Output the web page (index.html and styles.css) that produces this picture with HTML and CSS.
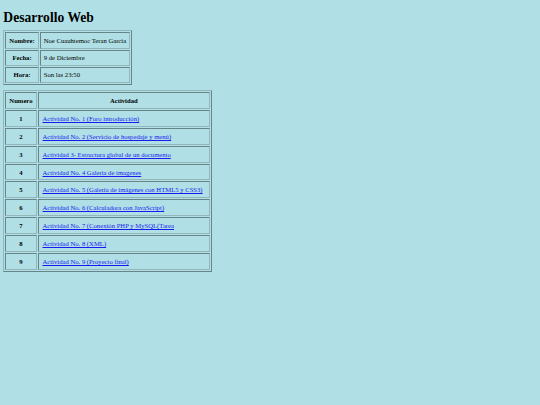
FILE: index.html
```html
<!DOCTYPE html>
<html lang="es">
<head>
<meta charset="utf-8">
<title>Desarrollo Web</title>
<link rel="stylesheet" href="styles.css">
</head>
<body>
<h1 class="title">Desarrollo Web</h1>
<table class="grid info">
  <tr><th>Nombre:</th><td>Noe Cuauhtemoc Teran Garcia</td></tr>
  <tr><th>Fecha:</th><td>9 de Diciembre</td></tr>
  <tr><th>Hora:</th><td>Son las 23:50</td></tr>
</table>
<table class="grid acts">
  <tr><th>Numero</th><th>Actividad</th></tr>
  <tr><th>1</th><td><a href="#">Actividad No. 1 (Foro introducción)</a></td></tr>
  <tr><th>2</th><td><a href="#">Actividad No. 2 (Servicio de hospedaje y menú)</a></td></tr>
  <tr><th>3</th><td><a href="#">Actividad 3- Estructura global de un documento</a></td></tr>
  <tr><th>4</th><td><a href="#">Actividad No. 4 Galeria de imagenes</a></td></tr>
  <tr><th>5</th><td><a href="#">Actividad No. 5 (Galería de imágenes con HTML5 y CSS3)</a></td></tr>
  <tr><th>6</th><td><a href="#">Actividad No. 6 (Calculadora con JavaScript)</a></td></tr>
  <tr><th>7</th><td><a href="#">Actividad No. 7 (Conexión PHP y MySQL(Tarea</a></td></tr>
  <tr><th>8</th><td><a href="#">Actividad No. 8 (XML)</a></td></tr>
  <tr><th>9</th><td><a href="#">Actividad No. 9 (Proyecto final)</a></td></tr>
</table>
</body>
</html>
```

FILE: styles.css
```css
html {
  background: #b0e0e6;
}
body {
  margin: 3.33px;
  font-family: "Liberation Serif", "Times New Roman", serif;
  font-size: 6.67px;
  color: #000;
}
.title {
  font-size: 13.6px;
  font-weight: bold;
  line-height: 15px;
  margin: 7px 0 5px;
}
.grid {
  border-collapse: separate;
  border-spacing: 1px;
  border: 1px solid;
  border-color: #94b6bb #66858a #66858a #94b6bb;
}
.grid th,
.grid td {
  border: 1px solid;
  border-color: #66858a #94b6bb #94b6bb #66858a;
  padding: 3.3px 3px;
  line-height: 7.67px;
}
.grid th {
  font-weight: bold;
  text-align: center;
}
.grid td {
  text-align: left;
}
.acts {
  margin-top: 5px;
}
.acts th,
.acts td {
  padding: 4px 3px 3.2px;
}
.acts td {
  padding-left: 4px;
  padding-right: 6.5px;
}
.grid a {
  color: #1a1aee;
  text-decoration: underline;
  text-decoration-skip-ink: none;
}
```
